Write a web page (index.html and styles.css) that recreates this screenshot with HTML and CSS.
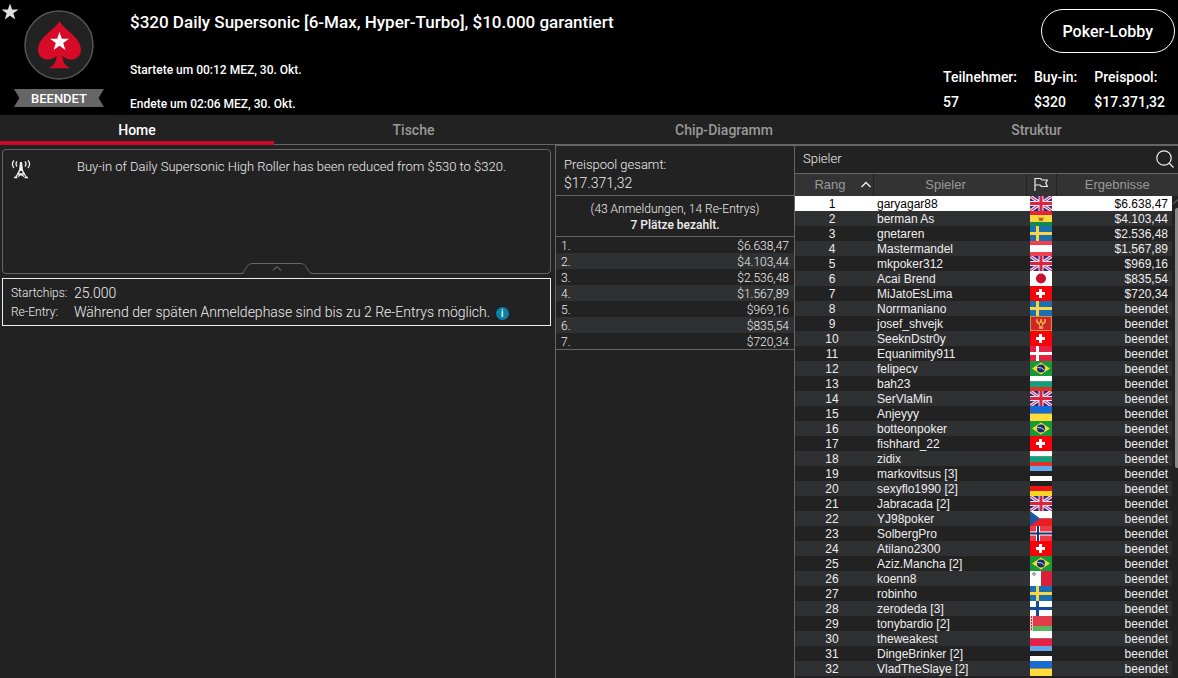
FILE: index.html
```html
<!DOCTYPE html>
<html lang="de">
<head>
<meta charset="utf-8">
<meta name="viewport" content="width=device-width, initial-scale=1">
<title>$320 Daily Supersonic</title>
<link rel="stylesheet" href="styles.css">
</head>
<body>
<svg class="sprite" aria-hidden="true">
  <symbol id="gb" viewBox="0 0 22 15"><path fill="#29298c" d="M0 0h22v15H0z"/><path stroke="#e8dcea" stroke-width="3.4" d="M0 0l22 15M22 0L0 15"/><path stroke="#d8203f" stroke-width="1" d="M0 0l22 15M22 0L0 15"/><path stroke="#f3e6ee" stroke-width="5" d="M11 0v15M0 7.500h22"/><path stroke="#dc2440" stroke-width="3" d="M11 0v15M0 7.500h22"/></symbol>
  <symbol id="bo" viewBox="0 0 22 15"><path fill="#e52436" d="M0 0h22v4H0z"/><path fill="#fbd93c" d="M0 4h22v7H0z"/><path fill="#138a4c" d="M0 11h22v4H0z"/><path fill="#a58a2c" d="M8 6l3 1.500 3-1.500-1 4H9z"/><circle cx="11" cy="8" r="1.500" fill="#c0502c"/></symbol>
  <symbol id="se" viewBox="0 0 22 15"><path fill="#1a70ae" d="M0 0h22v15H0z"/><path stroke="#fad548" stroke-width="3" d="M7.500 0v15M0 7.500h22"/></symbol>
  <symbol id="at" viewBox="0 0 22 15"><path fill="#ef4050" d="M0 0h22v15H0z"/><path fill="#fff" d="M0 4h22v7H0z"/></symbol>
  <symbol id="jp" viewBox="0 0 22 15"><path fill="#fff" d="M0 0h22v15H0z"/><circle cx="11" cy="7.500" r="5" fill="#c8102e"/></symbol>
  <symbol id="ch" viewBox="0 0 22 15"><path fill="#fa0008" d="M0 0h22v15H0z"/><path stroke="#fff" stroke-width="3" d="M10.500 3v9M6 7.500h9"/></symbol>
  <symbol id="me" viewBox="0 0 22 15"><path fill="#c59a3c" d="M0 0h22v15H0z"/><path fill="#d2232e" d="M1 1h20v13H1z"/><path fill="none" stroke="#e8a83c" stroke-width="1.800" d="M7 3q-1 4 3 5M15 3q1 4-3 5M9 12.500l2-1.500 2 1.500"/><path fill="#e8a83c" d="M10 3h2v2l1 2v3l-2 2-2-2V7l1-2z"/><path fill="#a54432" d="M10 7h2v3h-2z"/></symbol>
  <symbol id="dk" viewBox="0 0 22 15"><path fill="#e81f45" d="M0 0h22v15H0z"/><path stroke="#fff" stroke-width="3" d="M7.500 0v15M0 7.500h22"/></symbol>
  <symbol id="br" viewBox="0 0 22 15"><path fill="#15993b" d="M0 0h22v15H0z"/><path fill="#f8dc2c" d="M11 1.500l9 6-9 6-9-6z"/><circle cx="11" cy="7.500" r="4" fill="#142f78"/><path stroke="#c3d5e0" d="M7.500 6.500q4-.5 7 2.500" fill="none"/></symbol>
  <symbol id="bg" viewBox="0 0 22 15"><path fill="#fff" d="M0 0h22v5.500H0z"/><path fill="#12a07c" d="M0 5.500h22v5.500H0z"/><path fill="#df3525" d="M0 11h22v4H0z"/></symbol>
  <symbol id="ua" viewBox="0 0 22 15"><path fill="#176bd2" d="M0 0h22v7.500H0z"/><path fill="#ffdb3c" d="M0 7.500h22v7.500H0z"/></symbol>
  <symbol id="ee" viewBox="0 0 22 15"><path fill="#65a5ea" d="M0 0h22v5H0z"/><path fill="#202020" d="M0 5h22v5H0z"/><path fill="#fff" d="M0 10h22v5H0z"/></symbol>
  <symbol id="de" viewBox="0 0 22 15"><path fill="#202020" d="M0 0h22v5H0z"/><path fill="#ed1616" d="M0 5h22v5H0z"/><path fill="#fbd520" d="M0 10h22v5H0z"/></symbol>
  <symbol id="cz" viewBox="0 0 22 15"><path fill="#fff" d="M0 0h22v7.500H0z"/><path fill="#ea1d25" d="M0 7.500h22v7.500H0z"/><path fill="#1e569c" d="M0 0l10 7.500L0 15z"/></symbol>
  <symbol id="no" viewBox="0 0 22 15"><path fill="#ec3946" d="M0 0h22v15H0z"/><path stroke="#fff" stroke-width="4" d="M8 0v15M0 7.500h22"/><path stroke="#17346e" stroke-width="2" d="M8 0v15M0 7.500h22"/></symbol>
  <symbol id="mt" viewBox="0 0 22 15"><path fill="#fff" d="M0 0h11v15H0z"/><path fill="#d81f3c" d="M11 0h11v15H11z"/><path fill="#a9a9a9" d="M3 1h2v1h1v2H5v1H3V4H2V2h1z"/></symbol>
  <symbol id="fi" viewBox="0 0 22 15"><path fill="#fff" d="M0 0h22v15H0z"/><path stroke="#124a9a" stroke-width="3" d="M7.500 0v15M0 7.500h22"/></symbol>
  <symbol id="by" viewBox="0 0 22 15"><path fill="#e23c4b" d="M0 0h22v10H0z"/><path fill="#5bb560" d="M0 10h22v5H0z"/><path fill="#f3c8cc" d="M0 0h3v15H0z"/><path stroke="#d2232e" stroke-dasharray="2 1" d="M1.500 0v15"/></symbol>
  <symbol id="pl" viewBox="0 0 22 15"><path fill="#fff" d="M0 0h22v7.500H0z"/><path fill="#e81f45" d="M0 7.500h22v7.500H0z"/></symbol>
</svg>

<header class="header">
  <button class="favorite" type="button" aria-label="Favorit"><svg width="18" height="18" viewBox="0 0 18 18"><path fill="#e0e0e0" d="M9 .5l2.100 6h6.400l-5.200 3.800 2 6.200L9 12.700l-5.300 3.800 2-6.200L.5 6.500h6.400z"/></svg></button>
  <div class="brand">
    <svg width="70" height="70" viewBox="0 0 70 70" role="img" aria-label="PokerStars">
      <circle cx="35" cy="35" r="34" fill="#222" stroke="#555" stroke-width="1.500"/>
      <path fill="#d70a27" d="M35.500 11C40 20 57 27 57 40c0 9-11 13-18.500 6 .5 6 2 9.500 7 11.500v.8h-20v-.8c5-2 6.500-5.500 7-11.500C25 53 14 49 14 40c0-13 17-20 21.500-29z"/>
      <path fill="#fff" d="M35.500 22l2.300 6.800H45l-5.800 4.200 2.200 6.900-5.900-4.200-5.900 4.200 2.200-6.900-5.800-4.200h7.200z"/>
    </svg>
    <div class="status">BEENDET</div>
  </div>
  <div class="event">
    <h1>$320 Daily Supersonic [6-Max, Hyper-Turbo], $10.000 garantiert</h1>
    <p>Startete um 00:12 MEZ, 30. Okt.</p>
    <p>Endete um 02:06 MEZ, 30. Okt.</p>
  </div>
  <div class="summary">
    <button class="lobby" type="button">Poker-Lobby</button>
    <dl class="stats">
      <div><dt>Teilnehmer:</dt><dd>57</dd></div>
      <div><dt>Buy-in:</dt><dd>$320</dd></div>
      <div><dt>Preispool:</dt><dd>$17.371,32</dd></div>
    </dl>
  </div>
</header>

<nav class="tabs">
  <a class="active" href="#home" aria-current="page">Home</a>
  <a href="#tische">Tische</a>
  <a href="#chips">Chip-Diagramm</a>
  <a href="#struktur">Struktur</a>
</nav>

<main class="content">
  <section class="info">
    <div class="news">
      <svg width="20" height="22" viewBox="0 0 20 22" fill="none" stroke="#eee" stroke-width="1.300" aria-hidden="true">
        <path d="M3 3.500Q-.2 7 3 11M6 4.500Q4 7 6 9.500M17 3.500Q20.200 7 17 11M14 4.500q2 2.500 0 5"/>
        <path fill="#eee" stroke="none" d="M9 5h2l1 8 2 4h-2l-1-3H9l-1 3H6l2-4z"/>
        <path d="M7 16.500L4.500 20.500M13 16.500l2.500 4M6.500 17h7M3 20.500h3.500M13.500 20.500H17M7 19.500l3-2 3 2"/>
      </svg>
      <p>Buy-in of Daily Supersonic High Roller has been reduced from $530 to $320.</p>
      <button class="collapse" type="button" aria-label="Einklappen"><svg width="72" height="12" viewBox="0 0 72 12"><path fill="#222" stroke="#666" d="M0 10.500q2 0 3-2l3-5Q8 .5 11 .5h49q3 0 5 3l3 5q1 2 4 2"/><path fill="#222" d="M3 10h66v2H3z"/><path fill="none" stroke="#888" d="M32 7.500l4-4 4 4"/></svg></button>
    </div>
    <dl class="details">
      <dt>Startchips:</dt><dd>25.000</dd>
      <dt>Re-Entry:</dt><dd>Während der späten Anmeldephase sind bis zu 2 Re-Entrys möglich. <button class="hint" type="button" aria-label="Information">i</button></dd>
    </dl>
  </section>

  <section class="prizes">
    <div class="pool">Preispool gesamt:<strong>$17.371,32</strong></div>
    <div class="entries">(43 Anmeldungen, 14 Re-Entrys)<strong>7 Plätze bezahlt.</strong></div>
    <table class="payouts">
      <tr><th scope="row">1.</th><td>$6.638,47</td></tr>
      <tr><th scope="row">2.</th><td>$4.103,44</td></tr>
      <tr><th scope="row">3.</th><td>$2.536,48</td></tr>
      <tr><th scope="row">4.</th><td>$1.567,89</td></tr>
      <tr><th scope="row">5.</th><td>$969,16</td></tr>
      <tr><th scope="row">6.</th><td>$835,54</td></tr>
      <tr><th scope="row">7.</th><td>$720,34</td></tr>
    </table>
  </section>

  <section class="players">
    <div class="players-title">
      <h2>Spieler</h2>
      <button type="button" aria-label="Suchen"><svg width="18" height="18" viewBox="0 0 18 18" fill="none" stroke="#eee" stroke-width="1.200"><circle cx="8" cy="8" r="7.200"/><path d="M13 13l4.500 4.500"/></svg></button>
    </div>
    <div class="list">
      <table class="ranking">
        <colgroup><col class="c-rank"><col><col class="c-flag"><col class="c-result"></colgroup>
        <thead><tr>
          <th scope="col"><span class="sort">Rang<svg width="10" height="7" viewBox="0 0 10 7"><path fill="none" stroke="#eee" stroke-width="1.400" d="M.5 6L5 1.500 9.500 6"/></svg></span></th>
          <th scope="col">Spieler</th>
          <th scope="col"><svg width="14" height="14" viewBox="0 0 14 14" role="img" aria-label="Land"><path fill="none" stroke="#eee" stroke-width="1.200" d="M1 14V1.500h5.500L8 3h5.300l-1.500 3 1.500 3.500H7.500L6 8H1"/></svg></th>
          <th scope="col">Ergebnisse</th>
        </tr></thead>
        <tbody>
          <tr class="selected"><td>1</td><td>garyagar88</td><td><svg class="flag"><use href="#gb"/></svg></td><td>$6.638,47</td></tr>
          <tr><td>2</td><td>berman As</td><td><svg class="flag"><use href="#bo"/></svg></td><td>$4.103,44</td></tr>
          <tr><td>3</td><td>gnetaren</td><td><svg class="flag"><use href="#se"/></svg></td><td>$2.536,48</td></tr>
          <tr><td>4</td><td>Mastermandel</td><td><svg class="flag"><use href="#at"/></svg></td><td>$1.567,89</td></tr>
          <tr><td>5</td><td>mkpoker312</td><td><svg class="flag"><use href="#gb"/></svg></td><td>$969,16</td></tr>
          <tr><td>6</td><td>Acai Brend</td><td><svg class="flag"><use href="#jp"/></svg></td><td>$835,54</td></tr>
          <tr><td>7</td><td>MiJatoEsLima</td><td><svg class="flag"><use href="#ch"/></svg></td><td>$720,34</td></tr>
          <tr><td>8</td><td>Norrmaniano</td><td><svg class="flag"><use href="#se"/></svg></td><td>beendet</td></tr>
          <tr><td>9</td><td>josef_shvejk</td><td><svg class="flag"><use href="#me"/></svg></td><td>beendet</td></tr>
          <tr><td>10</td><td>SeeknDstr0y</td><td><svg class="flag"><use href="#ch"/></svg></td><td>beendet</td></tr>
          <tr><td>11</td><td>Equanimity911</td><td><svg class="flag"><use href="#dk"/></svg></td><td>beendet</td></tr>
          <tr><td>12</td><td>felipecv</td><td><svg class="flag"><use href="#br"/></svg></td><td>beendet</td></tr>
          <tr><td>13</td><td>bah23</td><td><svg class="flag"><use href="#bg"/></svg></td><td>beendet</td></tr>
          <tr><td>14</td><td>SerVlaMin</td><td><svg class="flag"><use href="#gb"/></svg></td><td>beendet</td></tr>
          <tr><td>15</td><td>Anjeyyy</td><td><svg class="flag"><use href="#ua"/></svg></td><td>beendet</td></tr>
          <tr><td>16</td><td>botteonpoker</td><td><svg class="flag"><use href="#br"/></svg></td><td>beendet</td></tr>
          <tr><td>17</td><td>fishhard_22</td><td><svg class="flag"><use href="#ch"/></svg></td><td>beendet</td></tr>
          <tr><td>18</td><td>zidix</td><td><svg class="flag"><use href="#bg"/></svg></td><td>beendet</td></tr>
          <tr><td>19</td><td>markovitsus [3]</td><td><svg class="flag"><use href="#ee"/></svg></td><td>beendet</td></tr>
          <tr><td>20</td><td>sexyflo1990 [2]</td><td><svg class="flag"><use href="#de"/></svg></td><td>beendet</td></tr>
          <tr><td>21</td><td>Jabracada [2]</td><td><svg class="flag"><use href="#gb"/></svg></td><td>beendet</td></tr>
          <tr><td>22</td><td>YJ98poker</td><td><svg class="flag"><use href="#cz"/></svg></td><td>beendet</td></tr>
          <tr><td>23</td><td>SolbergPro</td><td><svg class="flag"><use href="#no"/></svg></td><td>beendet</td></tr>
          <tr><td>24</td><td>Atilano2300</td><td><svg class="flag"><use href="#ch"/></svg></td><td>beendet</td></tr>
          <tr><td>25</td><td>Aziz.Mancha [2]</td><td><svg class="flag"><use href="#br"/></svg></td><td>beendet</td></tr>
          <tr><td>26</td><td>koenn8</td><td><svg class="flag"><use href="#mt"/></svg></td><td>beendet</td></tr>
          <tr><td>27</td><td>robinho</td><td><svg class="flag"><use href="#se"/></svg></td><td>beendet</td></tr>
          <tr><td>28</td><td>zerodeda [3]</td><td><svg class="flag"><use href="#fi"/></svg></td><td>beendet</td></tr>
          <tr><td>29</td><td>tonybardio [2]</td><td><svg class="flag"><use href="#by"/></svg></td><td>beendet</td></tr>
          <tr><td>30</td><td>theweakest</td><td><svg class="flag"><use href="#pl"/></svg></td><td>beendet</td></tr>
          <tr><td>31</td><td>DingeBrinker [2]</td><td><svg class="flag"><use href="#ee"/></svg></td><td>beendet</td></tr>
          <tr><td>32</td><td>VladTheSlaye [2]</td><td><svg class="flag"><use href="#ua"/></svg></td><td>beendet</td></tr>
        </tbody>
      </table>
      <div class="scrollbar" aria-hidden="true">
        <svg width="6" height="12" viewBox="0 0 6 12"><path fill="none" stroke="#555" stroke-width="1.500" d="M1 8l4-4 4 4"/></svg>
        <div class="thumb"></div>
      </div>
    </div>
  </section>
</main>
</body>
</html>
```

FILE: styles.css
```css
* {
  box-sizing: border-box;
}

body {
  margin: 0;
  min-height: 100vh;
  display: flex;
  flex-direction: column;
  background: #222;
  color: #eee;
  font-family: Roboto, "Liberation Sans", sans-serif;
  font-size: 13px;
}

h1, h2, p, dl, dd {
  margin: 0;
}

button {
  padding: 0;
  border: 0;
  background: none;
  color: inherit;
  font: inherit;
  cursor: pointer;
}

svg {
  display: block;
}

table {
  width: 100%;
  border-collapse: collapse;
}

.sprite {
  position: absolute;
  width: 0;
  height: 0;
}

.header {
  position: relative;
  display: flex;
  background: #000;
  color: #fff;
  font-weight: 500;
}

.favorite {
  position: absolute;
  left: 1px;
  top: 3px;
}

.brand {
  width: 90px;
  margin: 10px 26px 0 14px;
  display: flex;
  flex-direction: column;
  align-items: center;
  gap: 9px;
}

.status {
  width: 100%;
  height: 18px;
  background: #666;
  clip-path: polygon(0 0, 100% 0, 94% 50%, 100% 100%, 0 100%, 6% 50%);
  line-height: 20px;
  text-align: center;
}

.event {
  flex: 1;
  padding-top: 10px;
  font-size: 12px;
}

.event h1 {
  margin-bottom: 26px;
  font-size: 17px;
  font-weight: 500;
  line-height: 24px;
}

.event p {
  margin-bottom: 14px;
  line-height: 20px;
}

.event p:last-child {
  margin-bottom: 1px;
}

.summary {
  padding: 9px 3px 0 0;
  display: flex;
  flex-direction: column;
  align-items: flex-end;
  gap: 12px;
}

.lobby {
  height: 44px;
  padding: 0 21px;
  border: 1px solid #fff;
  border-radius: 22px;
  font-size: 16px;
}

.stats {
  display: flex;
  gap: 17px;
  margin-right: 10px;
  font-size: 14px;
  line-height: 25px;
}

.tabs {
  display: grid;
  grid-template-columns: 274fr 279fr 342fr 283fr;
  border-bottom: 1px solid #666;
}

.tabs a {
  height: 29px;
  color: #999;
  font-size: 14px;
  font-weight: 500;
  line-height: 30px;
  text-align: center;
  text-decoration: none;
}

.tabs .active {
  height: 30px;
  margin-bottom: -1px;
  border-bottom: 4px solid #c80a28;
  color: #fff;
}

.content {
  flex: 1;
  display: grid;
  grid-template-columns: 555fr 240fr 383fr;
}

.info {
  padding: 4px 4px 0 2px;
}

.news {
  position: relative;
  display: flex;
  height: 125px;
  padding: 7px 8px;
  border: 1px solid #666;
  border-radius: 4px;
  font-weight: 300;
}

.news p {
  flex: 1;
  padding-left: 46px;
  line-height: 20px;
}

.collapse {
  position: absolute;
  left: 50%;
  bottom: -2px;
  margin-left: -36px;
}

.details {
  display: grid;
  grid-template-columns: 63px 1fr;
  margin-top: 4px;
  padding: 5px 8px 3px;
  border: 1px solid #eee;
  font-size: 14px;
  font-weight: 300;
  line-height: 19px;
}

.details dt {
  font-size: 12px;
}

.hint {
  width: 13px;
  height: 13px;
  margin-left: 2px;
  border-radius: 50%;
  background: #0883a5;
  font-size: 11px;
  font-weight: 500;
  line-height: 13px;
}

.prizes {
  border: solid #666;
  border-width: 1px 1px 0;
  font-weight: 300;
}

.pool {
  padding: 10px 8px 3px;
  border-bottom: 1px solid #666;
  line-height: 18px;
}

.pool strong {
  display: block;
  font-size: 14px;
  font-weight: 300;
}

.entries {
  padding: 5px 0 3px;
  border-bottom: 1px solid #666;
  font-size: 12px;
  line-height: 16px;
  text-align: center;
}

.entries strong {
  display: block;
  font-weight: 500;
}

.payouts {
  border-bottom: 1px solid #666;
  font-size: 12px;
  line-height: 14px;
}

.payouts th,
.payouts td {
  padding: 2px 5px 0;
  font-weight: 300;
  text-align: left;
}

.payouts td {
  text-align: right;
}

.payouts tr:nth-child(even),
.ranking tbody tr:nth-child(even) {
  background: #2e3032;
}

.players {
  border-top: 1px solid #666;
}

.players-title {
  display: flex;
  align-items: center;
  justify-content: space-between;
  height: 28px;
  padding: 0 4px 2px 8px;
  border-bottom: 1px solid #666;
}

.players-title h2 {
  font-size: 13px;
  font-weight: 300;
}

.list {
  display: flex;
}

.ranking {
  flex: 1;
  table-layout: fixed;
  font-family: "Liberation Sans", Arial, sans-serif;
  font-size: 12px;
  line-height: 13px;
}

.c-rank {
  width: 78px;
}

.c-flag {
  width: 30px;
}

.c-result {
  width: 116px;
}

.ranking th {
  height: 22px;
  padding: 0 0 2px;
  border-right: 1px solid #222;
  background: #333;
  color: #999;
  font-size: 13px;
  font-weight: 400;
}

.ranking th:nth-child(2) {
  padding-right: 8px;
}

.ranking th:last-child {
  padding-left: 6px;
  border-right: 0;
}

.ranking th > svg {
  margin: 0 auto;
}

.sort {
  display: flex;
  align-items: center;
  justify-content: flex-end;
  gap: 15px;
  padding-right: 2px;
}

.ranking td {
  height: 15px;
  padding: 2px 0 0;
}

.ranking td:first-child {
  padding-right: 4px;
  text-align: center;
}

.ranking td:nth-child(2) {
  padding-left: 4px;
}

.ranking td:nth-child(3) {
  padding: 0 0 0 4px;
}

.ranking td:last-child {
  padding-right: 4px;
  text-align: right;
}

.ranking .selected {
  background: #fff;
  color: #000;
}

.flag {
  width: 22px;
  height: 15px;
}

.scrollbar {
  width: 6px;
  border-top: 22px solid #333;
}

.thumb {
  height: 260px;
  margin-left: 3px;
  border-radius: 2px 0 0 2px;
  background: #888;
}
```
